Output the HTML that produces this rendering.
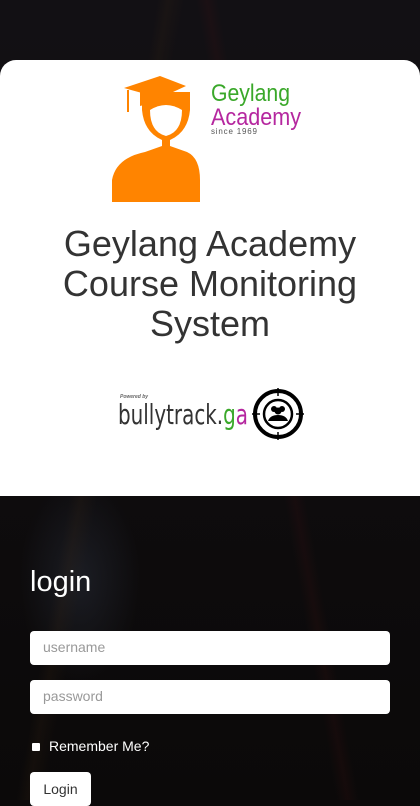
<!DOCTYPE html>
<html><head><meta charset="utf-8"><style>
*{margin:0;padding:0;box-sizing:border-box}
body{width:420px;height:800px;overflow:hidden;font-family:"Liberation Sans",sans-serif;background:#0d0a0b;position:relative}
.bg{position:absolute;inset:0;background:
linear-gradient(100deg,transparent 28%,rgba(60,40,20,.18) 30%,transparent 33%),
linear-gradient(80deg,transparent 60%,rgba(80,20,20,.15) 62%,transparent 64%),
radial-gradient(ellipse at 80px 580px,rgba(60,70,90,.3),transparent 60px),
linear-gradient(#121014,#0b0909)}
.card{position:absolute;left:0;top:60px;width:420px;height:436px;background:#fff;border-radius:16px 16px 0 0}
h1{position:absolute;top:224px;left:0;width:420px;text-align:center;font-weight:normal;font-size:36px;line-height:40px;color:#333}
.login{position:absolute;left:30px;top:566px;color:#fff;font-size:29px}
.inp{position:absolute;left:30px;width:360px;height:34px;background:#fff;border-radius:4px;color:#999;font-size:14px;padding:8px 13px}
.rem{position:absolute;left:32px;top:738px;color:#fff;font-size:14px}
.rem span{display:inline-block;width:8px;height:8px;background:#fff;margin-right:9px;border-radius:1px}
.btn{position:absolute;left:30px;top:772px;width:61px;height:34px;background:#fff;border-radius:4px;font-size:14px;color:#333;text-align:center;padding-top:9px}
</style></head><body>
<div class="bg"></div>
<div class="card"></div>
<svg style="position:absolute;left:100px;top:70px" width="220" height="140" viewBox="0 0 220 140">
<path d="M12 132 L12 110 Q16 88 45 82 L62 76 L62 70 Q44 62 42 40 L42 22 L90 22 L90 40 Q88 62 70 70 L70 76 L87 82 Q100 88 100 110 L100 132 Z" fill="#ff8400"/>
<path d="M50 40 Q50 62 66 66 Q82 62 82 40 Q66 30 50 40Z" fill="#fff"/>
<path d="M24 18 L60 6 L86 16 L60 28 Z" fill="#ff8400"/>
<path d="M40 20 L40 36 Q60 30 80 36 L80 22 L60 28Z" fill="#ff8400"/>
<line x1="28" y1="20" x2="28" y2="42" stroke="#ff8400" stroke-width="2"/>
<text x="111" y="31" font-family="Liberation Sans" font-size="24" fill="#3aa82a" textLength="79" lengthAdjust="spacingAndGlyphs">Geylang</text>
<text x="111" y="55" font-family="Liberation Sans" font-size="24" fill="#b5279f" textLength="90" lengthAdjust="spacingAndGlyphs">Academy</text>
<text x="111" y="64" font-family="Liberation Sans" font-size="8" fill="#555" textLength="46">since 1969</text>
</svg>
<h1>Geylang Academy<br>Course Monitoring<br>System</h1>
<svg style="position:absolute;left:100px;top:380px" width="220" height="70" viewBox="0 0 220 70">
<text x="20" y="18" font-family="Liberation Sans" font-size="5" font-style="italic" font-weight="bold" fill="#666">Powered by</text>
<text x="18" y="44" font-family="DejaVu Sans" font-size="28" fill="#333" textLength="130" lengthAdjust="spacingAndGlyphs">bullytrack.<tspan fill="#3aa82a">g</tspan><tspan fill="#b5279f">a</tspan></text>
<circle cx="178" cy="34" r="23" fill="none" stroke="#000" stroke-width="4"/>
<circle cx="178" cy="34" r="14" fill="none" stroke="#000" stroke-width="2.5"/>
<path d="M178 8v8M178 52v8M152 34h8M196 34h8" stroke="#000" stroke-width="1.5"/>
<circle cx="174" cy="29" r="3" fill="#000"/><circle cx="182" cy="29" r="3" fill="#000"/><circle cx="178" cy="31" r="3.5" fill="#000"/>
<path d="M168 41 q2-6 10-6 q8 0 10 6z" fill="#000"/>
</svg>
<div class="login">login</div>
<div class="inp" style="top:631px">username</div>
<div class="inp" style="top:680px">password</div>
<div class="rem"><span></span>Remember Me?</div>
<div class="btn">Login</div>
</body></html>
